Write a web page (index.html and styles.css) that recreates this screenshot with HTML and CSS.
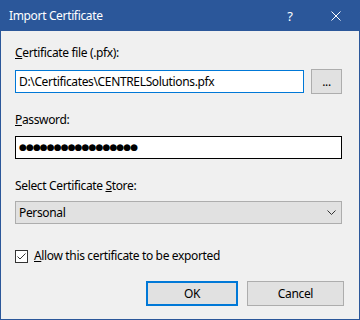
FILE: index.html
```html
<!DOCTYPE html>
<html lang="en">
<head>
    <meta charset="UTF-8">
    <title>Import Certificate</title>
    <link rel="stylesheet" href="styles.css">
</head>
<body>
    <div class="dialog">
        <div class="titlebar">
            <span class="title">Import Certificate</span>
            <span class="caption-btn help">?</span>
            <span class="caption-btn close">
                <svg width="10" height="10" viewBox="0 0 10 10">
                    <path d="M0.5 0.5 L9.5 9.5 M9.5 0.5 L0.5 9.5" stroke="#fff" stroke-width="1" fill="none"/>
                </svg>
            </span>
        </div>

        <div class="content">
            <label class="field-label"><u>C</u>ertificate file (.pfx):</label>
            <div class="file-row">
                <div class="textbox focused">D:\Certificates\CENTRELSolutions.pfx</div>
                <div class="btn browse">...</div>
            </div>

            <label class="field-label password-label"><u>P</u>assword:</label>
            <div class="textbox password">●●●●●●●●●●●●●●●●●</div>

            <label class="field-label store-label">Select Certificate <u>S</u>tore:</label>
            <div class="combo">
                <span>Personal</span>
                <svg class="chevron" width="9" height="5" viewBox="0 0 9 5">
                    <polyline points="0.5,0.5 4.5,4.5 8.5,0.5" stroke="#333" stroke-width="1" fill="none"/>
                </svg>
            </div>

            <div class="check-row">
                <span class="checkbox">
                    <svg width="11" height="11" viewBox="0 0 11 11">
                        <polyline points="1.5,5.5 4,8 9.5,2.5" stroke="#333" stroke-width="1" fill="none"/>
                    </svg>
                </span>
                <span><u>A</u>llow this certificate to be exported</span>
            </div>

            <div class="button-row">
                <div class="btn default">OK</div>
                <div class="btn cancel">Cancel</div>
            </div>
        </div>
    </div>
</body>
</html>
```

FILE: styles.css
```css
body {
    margin: 0;
    font-family: "Noto Sans", sans-serif;
    font-size: 12px;
    letter-spacing: -0.35px;
    color: #000;
    background: #f0f0f0;
}

/* Window frame */
.dialog {
    width: 360px;
    height: 320px;
    box-sizing: border-box;
    border: 1px solid #2b579a;
    border-top: 0;
    background: #f0f0f0;
    display: flex;
    flex-direction: column;
}

.titlebar {
    height: 31px;
    margin: 0 -1px;
    background: #2b579a;
    color: #fff;
    display: flex;
    align-items: center;
    padding-right: 1px;
}

.title {
    padding-left: 9px;
    flex: 1;
}

.caption-btn {
    width: 46px;
    height: 31px;
    display: flex;
    align-items: center;
    justify-content: center;
}

.help {
    font-size: 13px;
}

/* Dialog body */
.content {
    padding: 14px 17px 0 14px;
    display: flex;
    flex-direction: column;
}

.field-label {
    display: block;
    line-height: 16px;
}

.password-label {
    margin-top: 18px;
}

.store-label {
    margin-top: 19px;
}

.file-row {
    display: flex;
    gap: 7px;
    margin-top: 9px;
    align-items: flex-start;
}

.textbox {
    flex: 1;
    height: 23px;
    box-sizing: border-box;
    border: 1px solid #7a7a7a;
    background: #fff;
    padding: 0 3px;
    line-height: 21px;
    white-space: nowrap;
    overflow: hidden;
}

.textbox.focused {
    border-color: #0078d7;
}

.textbox.password {
    flex: none;
    margin-top: 8px;
    border-color: #000;
    font-family: "DejaVu Sans", sans-serif;
    font-size: 9px;
    letter-spacing: -0.9px;
    padding-left: 3px;
}

.btn {
    box-sizing: border-box;
    height: 25px;
    background: #e1e1e1;
    border: 1px solid #adadad;
    display: flex;
    align-items: center;
    justify-content: center;
}

.browse {
    width: 31px;
    margin-top: -1px;
}

.combo {
    margin-top: 7px;
    height: 23px;
    box-sizing: border-box;
    background: #e1e1e1;
    border: 1px solid #adadad;
    padding: 0 5px 0 3px;
    display: flex;
    align-items: center;
    justify-content: space-between;
}

.check-row {
    margin-top: 24px;
    display: flex;
    align-items: center;
    gap: 6px;
    line-height: 16px;
}

.checkbox {
    width: 13px;
    height: 13px;
    box-sizing: border-box;
    border: 1px solid #333;
    background: #fff;
    display: flex;
}

.button-row {
    margin-top: 17px;
    margin-right: -2px;
    display: flex;
    justify-content: flex-end;
    gap: 9px;
}

.default {
    width: 92px;
    border: 2px solid #0078d7;
}

.cancel {
    width: 97px;
}
```
